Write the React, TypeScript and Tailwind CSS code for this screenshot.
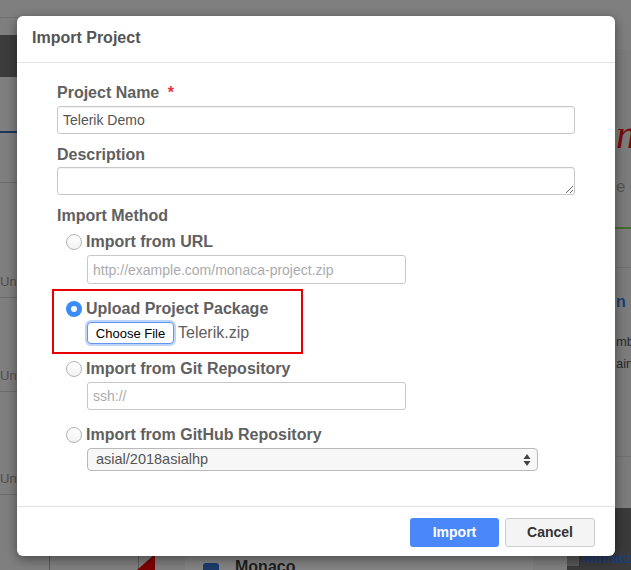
import React from "react";

function Radio({ checked }: { checked?: boolean }) {
  return checked ? (
    <span className="w-4 h-4 rounded-full bg-[#3b8cf6] flex items-center justify-center shrink-0">
      <span className="w-[6px] h-[6px] rounded-full bg-white" />
    </span>
  ) : (
    <span className="w-4 h-4 rounded-full border border-[#b3b3b3] bg-gradient-to-b from-white to-[#f2f2f2] shrink-0" />
  );
}

function RowLine({ label, tall }: { label: string; tall?: boolean }) {
  return (
    <div className={(tall ? "h-[103px]" : "h-[94px]") + " flex flex-col justify-end border-b border-[#6c6c6c]"}>
      <div className="text-[13px] text-[#505050] leading-[18px] mb-[6px]">{label}</div>
    </div>
  );
}

function Background() {
  return (
    <div className="absolute inset-0 bg-[#7f7f7f] flex overflow-hidden">
      {/* left column of the page below */}
      <div className="w-[185px] shrink-0 flex flex-col">
        <div className="h-[18px] border-b border-[#727272]" />
        <div className="h-[17px]" />
        <div className="h-[42px] bg-[#3c3c3c]" />
        <div className="h-[56px] border-b-2 border-[#1e355c]" />
        <div className="h-[50px] border-b border-[#6c6c6c]" />
        <div className="h-[21px]" />
        <RowLine label="Uns" />
        <RowLine label="Uns" />
        <RowLine label="Uns" tall />
        <div className="flex-1 flex items-end pl-[49px]">
          <div className="w-[90px] h-[18px] rounded-t-[3px] border border-b-0 border-[#5c5c5c]" />
          <svg className="-ml-[4px]" width="20" height="16" viewBox="0 0 20 16">
            <polygon points="20,0 20,16 2,16" fill="#7d0000" />
          </svg>
        </div>
      </div>
      {/* middle column */}
      <div className="flex-1 flex flex-col justify-end">
        <div className="w-[348px] h-[14px] bg-[#848484] flex items-start pl-[18px] gap-[16px] pt-[2px]">
          <div className="w-[16px] h-[16px] rounded-[3px] bg-[#1c3b6a] mt-[5px]" />
          <div className="text-[16px] font-bold text-[#1e1e1e] leading-[18px]">Monaco</div>
        </div>
      </div>
      {/* right column */}
      <div className="w-[64px] shrink-0 flex flex-col">
        <div className="h-[49px]" />
        <div className="flex-1 bg-[#7c7c7c] flex flex-col pl-[49px] overflow-hidden whitespace-nowrap">
          <div
            className="mt-[66px] h-[40px] text-[40px] italic text-[#7a0b0b] leading-[40px]"
            style={{ fontFamily: '"Liberation Serif", serif' }}
          >
            n
          </div>
          <div className="mt-[22px] text-[17px] text-[#555555] leading-[20px]">e c</div>
          <div className="-ml-[49px] mt-[30px] h-[2px] bg-[#3f6e2c] shrink-0" />
          <div className="-ml-[49px] mt-[38px] h-px bg-[#707070] shrink-0" />
          <div className="mt-[25px] text-[16px] font-bold text-[#1b3e73] leading-[18px]">n</div>
          <div className="mt-[22px] text-[13px] text-[#2b2b2b] leading-[18px]">mb</div>
          <div className="mt-[4px] text-[13px] text-[#2b2b2b] leading-[18px]">ain</div>
          <div className="-ml-[49px] mt-[83px] h-px bg-[#707070] shrink-0" />
        </div>
        <div className="h-[62px] bg-[#3a3a3a] flex items-end pb-[4px]">
          <div className="w-[12px] h-[28px] bg-[#575757] shrink-0" />
          <div className="ml-[4px] text-[14px] font-bold text-[#1d3f78] leading-[16px] whitespace-nowrap">Monaca</div>
        </div>
      </div>
    </div>
  );
}

export default function App() {
  const labelCls = "h-[20px] leading-[20px] text-[16px] font-bold text-[#606060]";
  const inputCls =
    "block w-full h-[28px] border border-[#c8c8c8] rounded-[3px] px-[5px] text-[14px] text-[#555555] bg-white shadow-[inset_0_1px_1px_rgba(0,0,0,0.06)] outline-none";
  const radioLabel = "ml-[4px] text-[16px] font-bold text-[#606060] leading-[20px]";
  return (
    <div
      className="relative w-[631px] h-[570px] overflow-hidden"
      style={{ fontFamily: '"Liberation Sans", Arial, sans-serif' }}
    >
      <Background />
      <div className="relative pt-[16px] pl-[17px]">
        <div className="w-[598px] h-[540px] bg-white rounded-[6px] shadow-[0_3px_12px_rgba(0,0,0,0.45)] flex flex-col">
          <div className="h-[47px] shrink-0 border-b border-[#e3e3e3] px-[15px] flex items-center pb-[2px]">
            <div className="text-[16px] font-bold text-[#555555]">Import Project</div>
          </div>
          <div className="flex-1 px-[40px] pt-[20px]">
            <div className={labelCls}>
              Project Name <span className="ml-[4px] text-[#e8323c]">*</span>
            </div>
            <input className={inputCls + " mt-[3px]"} defaultValue="Telerik Demo" />
            <div className={labelCls + " mt-[11px]"}>Description</div>
            <textarea className={inputCls + " mt-[2px] resize-y"} />
            <div className={labelCls + " mt-[11px]"}>Import Method</div>
            <div className="pl-[9px] mt-[6px] flex flex-col gap-[15px]">
              <div>
                <div className="h-[20px] flex items-center">
                  <Radio />
                  <span className={radioLabel}>Import from URL</span>
                </div>
                <input
                  className="block ml-[21px] mt-[3px] w-[319px] h-[29px] border border-[#c8c8c8] rounded-[3px] px-[5px] text-[14px] text-[#555555] placeholder:text-[#ababab] outline-none"
                  placeholder="http://example.com/monaca-project.zip"
                />
              </div>
              <div className="relative">
                <div className="absolute -left-[14px] -top-[10px] w-[251px] h-[65px] border-2 border-[#e60000] pointer-events-none" />
                <div className="h-[20px] flex items-center">
                  <Radio checked />
                  <span className={radioLabel}>Upload Project Package</span>
                </div>
                <div className="ml-[21px] mt-[3px] h-[22px] flex items-center">
                  <button className="w-[87px] h-[22px] rounded-[4px] bg-white border border-[#5f97ec] shadow-[0_0_0_2px_rgba(110,160,240,0.45)] text-[13px] text-black leading-none">
                    Choose File
                  </button>
                  <span className="ml-[4px] text-[16px] text-[#606060]">Telerik.zip</span>
                </div>
              </div>
              <div>
                <div className="h-[20px] flex items-center">
                  <Radio />
                  <span className={radioLabel}>Import from Git Repository</span>
                </div>
                <input
                  className="block ml-[21px] mt-[3px] w-[319px] h-[28px] border border-[#c8c8c8] rounded-[3px] px-[5px] text-[14px] text-[#555555] placeholder:text-[#ababab] outline-none"
                  placeholder="ssh://"
                />
              </div>
              <div>
                <div className="h-[20px] flex items-center">
                  <Radio />
                  <span className={radioLabel}>Import from GitHub Repository</span>
                </div>
                <div className="ml-[21px] mt-[3px] w-[451px] h-[23px] border border-[#b9b9b9] rounded-[4px] bg-[#f7f7f7] flex items-center pl-[8px] pr-[6px]">
                  <span className="flex-1 text-[14.5px] text-[#555555]">asial/2018asialhp</span>
                  <svg width="8" height="14" viewBox="0 0 8 14">
                    <polygon points="4,1 7.5,6 0.5,6" fill="#444" />
                    <polygon points="0.5,8 7.5,8 4,13" fill="#444" />
                  </svg>
                </div>
              </div>
            </div>
          </div>
          <div className="h-[50px] shrink-0 border-t border-[#e3e3e3] flex items-center justify-end gap-[6px] pr-[20px] pt-[1px]">
            <button className="w-[89px] h-[29px] rounded-[3px] bg-[#4a88fa] text-white text-[14px] font-bold">
              Import
            </button>
            <button className="w-[90px] h-[29px] rounded-[3px] bg-[#f4f4f4] border border-[#cccccc] text-[#333333] text-[14px] font-bold">
              Cancel
            </button>
          </div>
        </div>
      </div>
    </div>
  );
}
